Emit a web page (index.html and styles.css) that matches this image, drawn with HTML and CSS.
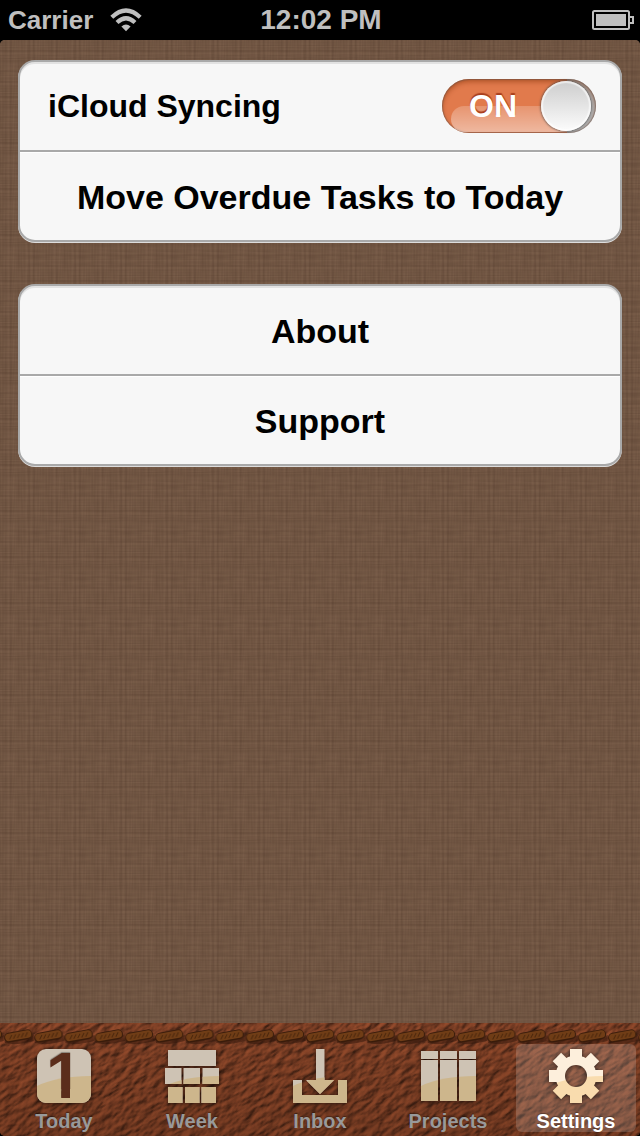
FILE: index.html
```html
<!DOCTYPE html>
<html lang="en">
<head>
<meta charset="utf-8">
<meta name="viewport" content="width=device-width">
<title>Settings</title>
<link rel="stylesheet" href="styles.css">
</head>
<body>
<div class="app">
  <header class="status">
    <div class="carrier">
      <span>Carrier</span>
      <svg class="wifi" width="32" height="24" viewBox="0 0 32 24" aria-hidden="true">
        <g fill="none" stroke="#bfbfbf" stroke-width="4.2">
          <path d="M1.8 9.2Q16 -4.2 30.2 9.2"/>
          <path d="M7 14.6Q16 6 25 14.6"/>
        </g>
        <path d="M11.4 18.6Q16 14.4 20.6 18.6L16 23.2Z" fill="#bfbfbf"/>
      </svg>
    </div>
    <time>12:02 PM</time>
    <svg class="battery" width="42" height="20" viewBox="0 0 42 20" aria-label="Battery full">
      <rect x="1" y="1" width="36" height="18" rx="1.5" fill="none" stroke="#bfbfbf" stroke-width="2"/>
      <rect x="4" y="4" width="30" height="12" fill="#bfbfbf"/>
      <path d="M38 7H41V13H38" fill="none" stroke="#bfbfbf" stroke-width="2"/>
    </svg>
  </header>

  <main class="page">
    <svg class="texture" width="100%" height="100%" aria-hidden="true">
      <defs>
        <filter id="warp" x="0" y="0" width="100%" height="100%" color-interpolation-filters="sRGB">
          <feTurbulence type="fractalNoise" baseFrequency="0.4 0.03" numOctaves="2" seed="3" stitchTiles="stitch"/>
          <feColorMatrix values="0 0 0 0 0.2  0 0 0 0 0.12  0 0 0 0 0.08  0.4 0 0 0 -0.13"/>
        </filter>
        <filter id="weft" x="0" y="0" width="100%" height="100%" color-interpolation-filters="sRGB">
          <feTurbulence type="fractalNoise" baseFrequency="0.03 0.4" numOctaves="2" seed="8" stitchTiles="stitch"/>
          <feColorMatrix values="0 0 0 0 0.2  0 0 0 0 0.12  0 0 0 0 0.08  0.4 0 0 0 -0.13"/>
        </filter>
        <pattern id="linen" width="46" height="46" patternUnits="userSpaceOnUse">
          <rect width="46" height="46" fill="#795d49"/>
          <rect width="46" height="46" filter="url(#warp)"/>
          <rect width="46" height="46" filter="url(#weft)"/>
        </pattern>
      </defs>
      <rect width="100%" height="100%" fill="url(#linen)"/>
    </svg>
    <section class="group">
      <div class="row row-switch">
        <label for="sync">iCloud Syncing</label>
        <div class="switch">
          <input id="sync" type="checkbox" role="switch" checked>
          <span class="on" aria-hidden="true">ON</span>
        </div>
      </div>
      <button class="row" type="button">Move Overdue Tasks to Today</button>
    </section>
    <section class="group">
      <button class="row" type="button">About</button>
      <button class="row" type="button">Support</button>
    </section>
  </main>

  <nav class="tabs">
    <svg class="texture" width="100%" height="100%" aria-hidden="true">
      <defs>
        <filter id="grain" x="0" y="0" width="100%" height="100%" color-interpolation-filters="sRGB">
          <feTurbulence type="fractalNoise" baseFrequency="0.08 0.16" numOctaves="4" seed="12"/>
          <feDiffuseLighting surfaceScale="1.7" diffuseConstant="1.1" lighting-color="#944b2c">
            <feDistantLight azimuth="250" elevation="50"/>
          </feDiffuseLighting>
        </filter>
        <pattern id="stitches" width="30.2" height="20" x="4" y="3" patternUnits="userSpaceOnUse">
          <path d="M0 12Q10 17 30 9V15Q12 20 1 17Z" fill="#2a1208" opacity=".5"/>
          <g transform="rotate(-10 14 10)">
            <rect x="0" y="5" width="28.500" height="10" rx="5" fill="#391b0a"/>
            <rect x="1" y="6" width="26.500" height="7.500" rx="3.700" fill="#703d16"/>
            <path d="M5 12L8 8M9 12L12 8M13 12L16 8M17 12L20 8M21 12L24 8" stroke="#4a260c"/>
          </g>
        </pattern>
        <linearGradient id="shade" x2="0" y2="1">
          <stop offset="0" stop-color="#1d0b03" stop-opacity=".05"/>
          <stop offset="1" stop-color="#1d0b03" stop-opacity=".2"/>
        </linearGradient>
      </defs>
      <rect x="-200" y="-400" width="1200" height="1000" transform="rotate(-33)" filter="url(#grain)"/>
      <rect width="100%" height="100%" fill="url(#shade)"/>
      <rect y="3" width="100%" height="20" fill="url(#stitches)"/>
    </svg>

    <a class="tab" href="#today">
      <svg class="icon" width="54" height="54" viewBox="0 0 54 54" aria-hidden="true">
        <clipPath id="c1"><rect width="54" height="54" rx="9"/></clipPath>
        <clipPath id="stem"><path d="M0 0H54V40H33V54H24.200V40H0Z"/></clipPath>
        <g clip-path="url(#c1)">
          <path class="hi" d="M0 0H54V54H0Z"/><path class="lo" d="M0 37Q20 27 54 27V54H0Z"/>
        </g>
        <text class="numeral" x="9" y="49" clip-path="url(#stem)">1</text>
      </svg>
      <span>Today</span>
    </a>
    <a class="tab" href="#week">
      <svg class="icon" width="54" height="54" viewBox="0 0 54 54" aria-hidden="true">
        <clipPath id="c2"><path d="M3 1H51V17H3ZM0 19H16.500V35H0ZM18.500 19H35V35H18.500ZM37.500 19H54V35H37.500ZM3 38H17.500V54H3ZM20 38H34.500V54H20ZM36.500 38H51V54H36.500Z"/></clipPath>
        <g clip-path="url(#c2)">
          <path class="hi" d="M0 0H54V54H0Z"/><path class="lo" d="M0 37Q20 27 54 27V54H0Z"/>
        </g>
      </svg>
      <span>Week</span>
    </a>
    <a class="tab" href="#inbox">
      <svg class="icon" width="54" height="54" viewBox="0 0 54 54" aria-hidden="true">
        <clipPath id="c3"><path d="M23 0H31.500V31H41L27 45L13 31H23ZM0 31H9V46H45V31H54V54H0Z"/></clipPath>
        <g clip-path="url(#c3)">
          <path class="hi" d="M0 0H54V54H0Z"/><path class="lo" d="M0 37Q20 27 54 27V54H0Z"/>
        </g>
      </svg>
      <span>Inbox</span>
    </a>
    <a class="tab" href="#projects">
      <svg class="icon" width="54" height="54" viewBox="0 0 54 54" aria-hidden="true">
        <clipPath id="c4"><path d="M0 2H17V10H0ZM19 2H36V10H19ZM38 2H55V10H38ZM0 11H17V52H0ZM19 11H36V52H19ZM38 11H55V52H38Z"/></clipPath>
        <g clip-path="url(#c4)">
          <path class="hi" d="M0 0H55V54H0Z"/><path class="lo" d="M0 37Q20 27 55 27V54H0Z"/>
        </g>
      </svg>
      <span>Projects</span>
    </a>
    <a class="tab selected" href="#settings" aria-current="page">
      <svg class="icon" width="54" height="54" viewBox="0 0 54 54" aria-hidden="true">
        <mask id="gear" maskUnits="userSpaceOnUse" x="0" y="0" width="54" height="54">
          <g fill="#fff">
            <circle cx="27" cy="27" r="20.500"/>
            <rect x="21" width="12" height="54"/>
            <rect x="21" width="12" height="54" transform="rotate(45 27 27)"/>
            <rect x="21" width="12" height="54" transform="rotate(90 27 27)"/>
            <rect x="21" width="12" height="54" transform="rotate(135 27 27)"/>
          </g>
          <circle cx="27" cy="27" r="11"/>
        </mask>
        <g mask="url(#gear)">
          <path class="hi" d="M0 0H54V54H0Z"/><path class="lo" d="M0 37Q20 27 54 27V54H0Z"/>
        </g>
      </svg>
      <span>Settings</span>
    </a>
  </nav>
</div>
</body>
</html>
```
FILE: styles.css
```css
* { box-sizing: border-box; }

body {
  margin: 0;
  background: #000;
  font-family: "Liberation Sans", Arial, sans-serif;
  font-weight: 700;
}

.app {
  display: flex;
  flex-direction: column;
  min-height: 100vh;
}

.status {
  display: grid;
  grid-template-columns: 1fr auto 1fr;
  align-items: center;
  height: 40px;
  padding: 0 6px 0 8px;
  color: #bfbfbf;
  font-size: 26px;
}
.status time { font-size: 28px; }
.carrier { display: flex; align-items: center; gap: 17px; }
.battery { justify-self: end; }

.page {
  position: relative;
  isolation: isolate;
  flex: 1;
  display: flex;
  flex-direction: column;
  gap: 42px;
  padding: 20px 18px;
  border-radius: 5px 5px 0 0;
  overflow: hidden;
  background: #715644;
}

.texture {
  position: absolute;
  inset: 0;
  z-index: -1;
}

.group {
  border: 2px solid #a9a9a9;
  border-radius: 17px;
  background: #f7f7f7;
  box-shadow: 0 1px 0 #ddd, inset 0 2px 0 #e2e2e2;
}

.row {
  display: flex;
  align-items: center;
  justify-content: center;
  width: 100%;
  min-height: 88px;
  padding: 2px 24px 0;
  border: 0;
  background: none;
  color: #000;
  font: inherit;
  font-size: 34px;
}
.row + .row {
  min-height: 90px;
  border-top: 2px solid #a9a9a9;
  box-shadow: inset 0 1px 0 #fff;
}
.row-switch {
  justify-content: space-between;
  padding: 0 24px 0 28px;
  font-size: 32px;
}

.switch { position: relative; display: flex; }
.switch input {
  appearance: none;
  position: relative;
  width: 154px;
  height: 54px;
  margin: 0;
  border-radius: 27px;
  overflow: hidden;
  background: linear-gradient(90deg, #e17a4c 125px, #b5b5b5 125px);
  box-shadow: inset 0 0 1px 1px #6b554b88, inset 0 3px 5px #7b2b0077;
}
.switch input::before {
  content: "";
  position: absolute;
  inset: 27px 29px 1px 9px;
  border-radius: 16px 0 0 16px;
  background: linear-gradient(#fff3, #fff7);
}
.switch::after {
  content: "";
  position: absolute;
  top: 2px;
  right: 5px;
  width: 50px;
  height: 50px;
  border-radius: 50%;
  background: linear-gradient(#cdcdcd, #fcfcfc);
  box-shadow: inset 0 0 1px 2px #fff9, 0 0 2px 1px #4449;
  pointer-events: none;
}
.on {
  position: absolute;
  left: 27px;
  top: 9px;
  color: #fff;
  font-size: 32px;
  line-height: 36px;
  text-shadow: 0 -2px 1px #a83e1c;
  pointer-events: none;
}

.tabs {
  position: relative;
  isolation: isolate;
  display: grid;
  grid-template-columns: repeat(5, 1fr);
  height: 113px;
  padding-top: 21px;
  border-radius: 0 0 5px 5px;
  overflow: hidden;
  background: #6b351e;
}
.tab {
  display: flex;
  flex-direction: column;
  align-items: center;
  gap: 6px;
  height: 88px;
  margin: 0 4px;
  padding-top: 5px;
  border-radius: 6px;
  color: #999;
  font-size: 20px;
  line-height: 24px;
  text-decoration: none;
  text-shadow: 0 -1px 1px #0005;
}
.icon { overflow: visible; filter: drop-shadow(0 1px 2px #0009); }
.hi { fill: #cec3b4; }
.lo { fill: #cdb68c; }
.numeral { fill: #5b2d1b; font-size: 65px; }
.selected { background: #ffffff2b; color: #fff; }
.selected .hi { fill: #fdefdc; }
.selected .lo { fill: #f9dcae; }
```
